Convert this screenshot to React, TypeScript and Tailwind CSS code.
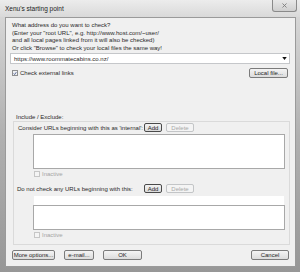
import { X } from "lucide-react";

function Btn({ label, w, disabled = false, strong = false }: { label: string; w: string; disabled?: boolean; strong?: boolean }) {
  return (
    <div
      className={`${w} h-full flex items-center justify-center rounded-[2px] border bg-gradient-to-b ${
        disabled
          ? "border-[#c3c5c7] from-[#f4f4f4] to-[#f4f4f4] text-[#a8a8a8]"
          : strong
          ? "border-[#4a4a4a] from-[#f3f3f3] to-[#dadada] text-[#262626]"
          : "border-[#7b7b7b] from-[#f4f4f4] to-[#dcdcdc] text-[#262626]"
      }`}
    >
      {label}
    </div>
  );
}

function Check({ checked = false, disabled = false }: { checked?: boolean; disabled?: boolean }) {
  return (
    <div
      className={`w-[6px] h-[6px] border flex items-center justify-center ${
        disabled ? "border-[#c6c6c6] bg-[#f4f4f4]" : "border-[#8e8f8f] bg-[#eef0f3]"
      }`}
    >
      {checked && (
        <svg viewBox="0 0 6 6" className="w-[5px] h-[5px]">
          <path d="M1 3 L2.4 4.5 L5 1" stroke="#2c3e78" strokeWidth="1.1" fill="none" />
        </svg>
      )}
    </div>
  );
}

export default function App() {
  return (
    <div className="w-[300px] h-[272px] flex flex-col overflow-hidden bg-gradient-to-b from-[#dcdcdc] via-[#b0b0b0] to-[#979797] font-['Liberation_Sans',Arial,sans-serif] text-[6px] text-[#2a2a2a] leading-none">
      {/* title bar */}
      <div className="h-[17px] shrink-0 flex items-start justify-between pl-[5px] pr-[3px] bg-gradient-to-b from-[#ececec] to-[#d9d9d9]">
        <span className="mt-[6px] text-[6.5px] text-[#222]">Xenu's starting point</span>
        <div className="w-[25px] h-[12px] flex items-center justify-center rounded-b-[3px] border border-t-0 border-[#8a8a8a] bg-gradient-to-b from-[#e8e8e8] to-[#cfcfcf]">
          <X size={7} strokeWidth={3} className="text-[#7a7a7a]" />
        </div>
      </div>

      {/* client */}
      <div className="flex-1 flex flex-col ml-[5px] mr-[4px] mb-[5px] bg-[#f0f0f0] border border-[#9a9a9a]">
        <div className="pl-[6px] pt-[4px] leading-[7.5px]">
          <div>What address do you want to check?</div>
          <div>(Enter your "root URL", e.g. http://www.host.com/~user/</div>
          <div>and all local pages linked from it will also be checked)</div>
          <div>Or click "Browse" to check your local files the same way!</div>
        </div>

        <div className="mt-[1px] ml-[4px] mr-[5px] h-[11px] flex items-center justify-between bg-white border border-[#c5c7ca] pl-[3px] pr-[2px]">
          <span>https://www.roommatecabins.co.nz/</span>
          <svg viewBox="0 0 6 4" className="w-[5px] h-[3px]">
            <path d="M0 0 H6 L3 4 Z" fill="#111" />
          </svg>
        </div>

        <div className="mt-[4px] ml-[6px] mr-[7px] h-[10px] flex items-center justify-between">
          <div className="flex items-center gap-[2px]">
            <Check checked />
            <span>Check external links</span>
          </div>
          <Btn label="Local file..." w="w-[39px]" />
        </div>

        <div className="mt-[36px] ml-[10px]">Include / Exclude:</div>

        <div className="mt-[1px] ml-[7px] mr-[5px] flex flex-col border border-[#dadada] pl-[4px] pr-[4px] pb-[6px]">
          <div className="mt-[1px] h-[9px] flex items-center">
            <span className="w-[126px]">Consider URLs beginning with this as 'internal':</span>
            <Btn label="Add" w="w-[18px]" strong />
            <div className="w-[4px]" />
            <Btn label="Delete" w="w-[28px]" disabled />
          </div>
          <div className="mt-[2px] ml-[15px] h-[35px] bg-white border border-[#a8a8a8]" />
          <div className="mt-[2px] ml-[16px] flex items-center gap-[2px] text-[#a4a4a4]">
            <Check disabled />
            <span>Inactive</span>
          </div>
          <div className="mt-[7px] h-[9px] flex items-center">
            <span className="w-[126px] -ml-[1px] mr-[1px]">Do not check any URLs beginning with this:</span>
            <Btn label="Add" w="w-[18px]" strong />
            <div className="w-[4px]" />
            <Btn label="Delete" w="w-[28px]" disabled />
          </div>
          <div className="mt-[2px] ml-[15px] h-[10px] bg-white border border-[#f0f0f0] border-b-0" />
          <div className="ml-[15px] h-[25px] bg-white border border-[#a8a8a8]" />
          <div className="mt-[2px] ml-[16px] flex items-center gap-[2px] text-[#a4a4a4]">
            <Check disabled />
            <span>Inactive</span>
          </div>
        </div>

        <div className="mt-[5px] ml-[6px] mr-[6px] h-[10px] flex items-center">
          <Btn label="More options..." w="w-[43px]" />
          <div className="w-[9px]" />
          <Btn label="e-mail..." w="w-[30px]" />
          <div className="w-[9px]" />
          <Btn label="OK" w="w-[39px]" />
          <div className="flex-1" />
          <Btn label="Cancel" w="w-[38px]" />
        </div>
      </div>
    </div>
  );
}
